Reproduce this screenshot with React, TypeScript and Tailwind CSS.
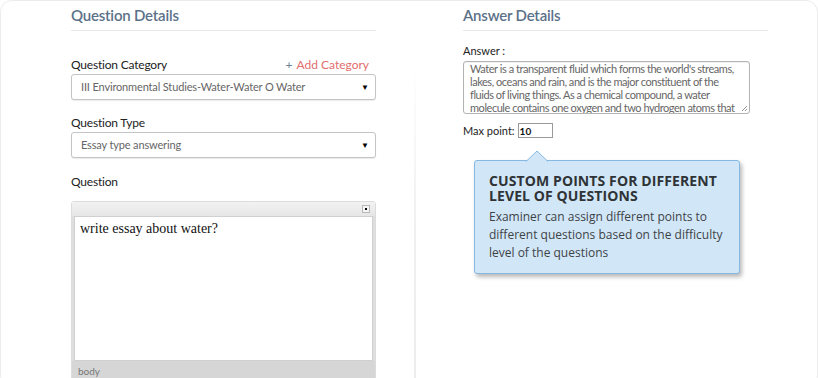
import React from 'react';

const labelFont = { fontFamily: 'Lato, "Liberation Sans", sans-serif' };

const SelectBox: React.FC<{ value: string }> = ({ value }) => (
  <div className="mt-[1px] h-[26px] w-[305px] flex items-center justify-between border border-[#c4c4c4] rounded-[3px] bg-white pl-[9px] pr-[6px] shadow-[0_1px_1px_rgba(0,0,0,0.08)]">
    <span className="text-[11px] text-[#666] tracking-[-0.15px]">{value}</span>
    <span className="text-[8px] text-black leading-none">▼</span>
  </div>
);

export default function App() {
  return (
    <div className="w-[818px] h-[378px] bg-white overflow-hidden" style={labelFont}>
      <div className="w-[818px] h-[388px] rounded-[12px] border border-[#ececec] bg-white flex pl-[70px]">
        {/* Question column */}
        <div className="w-[305px] flex flex-col">
          <div className="h-[30px] border-b border-[#e8e8e8] pt-[4px]">
            <h2 className="text-[15px] leading-[20px] font-semibold text-[#5b7189] tracking-[-0.2px]">Question Details</h2>
          </div>

          <div className="mt-[26px] h-[16px] flex items-center justify-between pr-[7px]">
            <span className="text-[12px] text-[#222] tracking-[-0.2px]">Question Category</span>
            <span className="text-[12px] text-[#e26d6d]">
              <span className="text-[#6b7f96] mr-[4px]">+</span>Add Category
            </span>
          </div>
          <SelectBox value="III Environmental Studies-Water-Water O Water" />

          <div className="mt-[15px] h-[16px] flex items-center">
            <span className="text-[12px] text-[#222] tracking-[-0.2px]">Question Type</span>
          </div>
          <SelectBox value="Essay type answering" />

          <div className="mt-[16px] h-[16px] flex items-center">
            <span className="text-[12px] text-[#222] tracking-[-0.2px]">Question</span>
          </div>

          {/* editor */}
          <div className="mt-[11px] flex-1 flex flex-col border border-[#dcdcdc] rounded-t-[3px] bg-[#dedede]">
            <div className="h-[14px] flex items-center justify-end pr-[5px] bg-gradient-to-b from-[#f2f2f2] to-[#e6e6e6]">
              <div className="w-[8px] h-[8px] border border-[#b9b9b9] bg-[#f5f5f5] flex items-center justify-center">
                <div className="w-[2px] h-[2px] bg-black" />
              </div>
            </div>
            <div className="mx-[2px] h-[145px] bg-white border border-[#d0d0d0] px-[5px] pt-[3px]">
              <p className="text-[14px] leading-[18px] text-[#111]" style={{ fontFamily: '"Liberation Serif", serif' }}>
                write essay about water?
              </p>
            </div>
            <div className="h-[20px] flex items-center pl-[6px] bg-[#d6d6d6]">
              <span className="text-[10px] text-[#777]">body</span>
            </div>
          </div>
        </div>

        {/* divider */}
        <div className="ml-[38px] mt-[60px] w-[2px] bg-gradient-to-b from-white via-[#f0f0f0] to-[#ececec]" />

        {/* Answer column */}
        <div className="ml-[47px] w-[305px] flex flex-col">
          <div className="h-[30px] border-b border-[#e8e8e8] pt-[4px]">
            <h2 className="text-[15px] leading-[20px] font-semibold text-[#5b7189] tracking-[-0.2px]">Answer Details</h2>
          </div>

          <div className="mt-[12px] h-[16px] flex items-center">
            <span className="text-[11px] text-[#222]">Answer :</span>
          </div>
          <div className="mt-[2px] relative w-[287px] h-[53px] border border-[#b3b3b3] rounded-[3px] overflow-hidden pl-[6px] pr-[8px] shadow-[inset_0_1px_1px_rgba(0,0,0,0.06)]">
            <p className="text-[11px] leading-[13px] text-[#666] tracking-[-0.45px]">
              Water is a transparent fluid which forms the world's streams, lakes, oceans and rain, and is the major constituent of the fluids of living things. As a chemical compound, a water molecule contains one oxygen and two hydrogen atoms that
            </p>
            <svg className="absolute right-[1px] bottom-[1px]" width="7" height="7" viewBox="0 0 7 7">
              <path d="M6 1 L1 6 M6 4 L4 6" stroke="#999" strokeWidth="1" />
            </svg>
          </div>

          <div className="mt-[9px] h-[15px] flex items-center">
            <span className="text-[11px] leading-none text-[#222] mr-[3px]">Max point:</span>
            <div className="w-[35px] h-[15px] border border-[#9a9a9a] flex items-center pl-[1px]">
              <span className="text-[10px] leading-none font-bold text-[#111]">10</span>
            </div>
          </div>

          {/* tooltip */}
          <div
            className="relative mt-[22px] ml-[11px] w-[266px] h-[114px] bg-[#d1e7f8] border border-[#86b8e2] rounded-[3px] shadow-[2px_3px_4px_rgba(0,0,0,0.28)] pl-[14px] pt-[12px]"
            style={{ fontFamily: '"Open Sans", sans-serif' }}
          >
            <svg className="absolute left-[51px] top-[-11px]" width="22" height="12" viewBox="0 0 22 12">
              <path d="M0 11.5 L11 1 L22 11.5" fill="#d1e7f8" stroke="#86b8e2" strokeWidth="1" />
              <rect x="1" y="11" width="20" height="2" fill="#d1e7f8" />
            </svg>
            <h3 className="text-[14px] leading-[15px] font-bold text-[#2f3336] tracking-[0.1px]">
              CUSTOM POINTS FOR DIFFERENT
              <br />
              LEVEL OF QUESTIONS
            </h3>
            <p className="mt-[5px] text-[12px] leading-[18px] text-[#3e4347]">
              Examiner can assign different points to different questions based on the difficulty level of the questions
            </p>
          </div>
        </div>
      </div>
    </div>
  );
}
